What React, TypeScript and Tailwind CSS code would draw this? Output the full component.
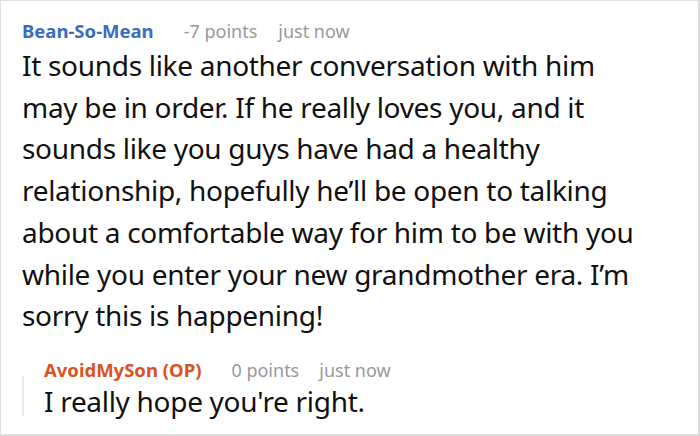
import React from "react";

const lines = [
  "It sounds like another conversation with him",
  "may be in order. If he really loves you, and it",
  "sounds like you guys have had a healthy",
  "relationship, hopefully he’ll be open to talking",
  "about a comfortable way for him to be with you",
  "while you enter your new grandmother era. I’m",
  "sorry this is happening!",
];

export default function App() {
  return (
    <div
      className="w-[700px] h-[436px] bg-white border border-[#dedede] border-r-2 border-b-2 overflow-hidden"
      style={{ fontFamily: '"Noto Sans", "Open Sans", sans-serif' }}
    >
      <div className="pl-[21px] pt-[18px]">
        <div className="flex items-baseline text-[18px] leading-[24px]">
          <span className="font-bold text-[18.5px] text-[#3a6cc0]">Bean-So-Mean</span>
          <span className="ml-[30px] text-[#999999]">-7 points</span>
          <span className="ml-[21px] text-[#999999]">just now</span>
        </div>
        <p className="mt-[2px] text-[28px] tracking-[-0.3px] leading-[41.7px] text-[#111111] whitespace-nowrap">
          {lines.map((l, i) => (
            <React.Fragment key={i}>
              {l}
              {i < lines.length - 1 && <br />}
            </React.Fragment>
          ))}
        </p>
      </div>
      <div className="ml-[21px] mt-[21px] flex">
        <div className="mt-[18px] h-[40px] w-[2px] bg-[#e8e8e8]" />
        <div className="pl-[20px]">
          <div className="flex items-baseline text-[18px] leading-[24px]">
            <span className="font-bold text-[18.5px] text-[#d9531e]">AvoidMySon (OP)</span>
            <span className="ml-[30px] text-[#999999]">0 points</span>
            <span className="ml-[20px] text-[#999999]">just now</span>
          </div>
          <p className="-mt-[1px] text-[28px] tracking-[-0.3px] leading-[41.5px] text-[#111111]">I really hope you're right.</p>
        </div>
      </div>
    </div>
  );
}
